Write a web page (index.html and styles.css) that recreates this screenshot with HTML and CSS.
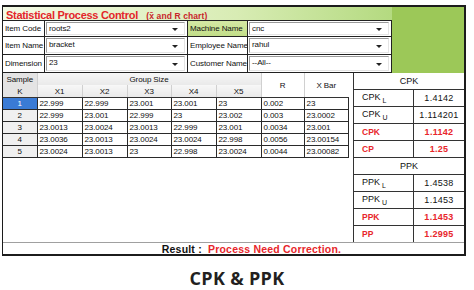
FILE: index.html
```html
<!DOCTYPE html>
<html lang="en">
<head>
    <meta charset="UTF-8">
    <title>CPK &amp; PPK</title>
    <link rel="stylesheet" href="styles.css">
</head>
<body>
    <div class="frame">
        <div class="top">
            <div class="top-left">
                <div class="title">
                    <span class="title-main">Statistical Process Control</span>
                    <span class="title-sub">(x&#772; and R chart)</span>
                </div>
                <div class="form">
                    <div class="lbl">Item Code</div>
                    <div class="cell"><div class="combo">roots2</div></div>
                    <div class="lbl lbl-green">Machine Name</div>
                    <div class="cell"><div class="combo">cnc</div></div>

                    <div class="lbl">Item Name</div>
                    <div class="cell"><div class="combo">bracket</div></div>
                    <div class="lbl">Employee Name</div>
                    <div class="cell"><div class="combo">rahul</div></div>

                    <div class="lbl">Dimension</div>
                    <div class="cell"><div class="combo">23</div></div>
                    <div class="lbl">Customer Name</div>
                    <div class="cell"><div class="combo">--All--</div></div>
                </div>
            </div>
            <div class="green"></div>
        </div>

        <div class="mid">
            <div class="grid-wrap">
                <table class="grid">
                    <colgroup>
                        <col class="c-k"><col class="c-x"><col class="c-x"><col class="c-x3"><col class="c-x"><col class="c-x"><col class="c-r"><col class="c-xb">
                    </colgroup>
                    <thead>
                        <tr class="h1">
                            <th class="hk">Sample</th>
                            <th colspan="5">Group Size</th>
                            <th rowspan="2" class="hw">R</th>
                            <th rowspan="2" class="hw">X Bar</th>
                        </tr>
                        <tr class="h2">
                            <th class="hk">K</th>
                            <th>X1</th><th>X2</th><th>X3</th><th>X4</th><th>X5</th>
                        </tr>
                    </thead>
                    <tbody>
                        <tr><td class="k sel">1</td><td>22.999</td><td>22.999</td><td>23.001</td><td>23.001</td><td>23</td><td>0.002</td><td>23</td></tr>
                        <tr><td class="k">2</td><td>22.999</td><td>23.001</td><td>22.999</td><td>23</td><td>23.002</td><td>0.003</td><td>23.0002</td></tr>
                        <tr><td class="k">3</td><td>23.0013</td><td>23.0024</td><td>23.0013</td><td>22.999</td><td>23.001</td><td>0.0034</td><td>23.001</td></tr>
                        <tr><td class="k">4</td><td>23.0036</td><td>23.0013</td><td>23.0024</td><td>23.0024</td><td>22.998</td><td>0.0056</td><td>23.00154</td></tr>
                        <tr><td class="k">5</td><td>23.0024</td><td>23.0013</td><td>23</td><td>22.998</td><td>23.0024</td><td>0.0044</td><td>23.00082</td></tr>
                    </tbody>
                </table>
            </div>

            <div class="cap">
                <div class="cap-head">CPK</div>
                <div class="cap-row"><span class="cap-lbl">CPK<sub>L</sub></span><span class="cap-val">1.4142</span></div>
                <div class="cap-row"><span class="cap-lbl">CPK<sub>U</sub></span><span class="cap-val">1.114201</span></div>
                <div class="cap-row red"><span class="cap-lbl">CPK</span><span class="cap-val">1.1142</span></div>
                <div class="cap-row red"><span class="cap-lbl">CP</span><span class="cap-val">1.25</span></div>
                <div class="cap-head">PPK</div>
                <div class="cap-row"><span class="cap-lbl">PPK<sub>L</sub></span><span class="cap-val">1.4538</span></div>
                <div class="cap-row"><span class="cap-lbl">PPK<sub>U</sub></span><span class="cap-val">1.1453</span></div>
                <div class="cap-row red"><span class="cap-lbl">PPK</span><span class="cap-val">1.1453</span></div>
                <div class="cap-row red last"><span class="cap-lbl">PP</span><span class="cap-val">1.2995</span></div>
            </div>
        </div>

        <div class="result">Result : <span class="result-msg">Process Need Correction.</span></div>
    </div>

    <div class="caption">CPK &amp; PPK</div>
</body>
</html>
```

FILE: styles.css
```css
body {
    margin: 0;
    padding: 5px 0 0 2px;
    background: #fff;
    font-family: "Liberation Sans", Arial, sans-serif;
    color: #111;
}

.frame {
    width: 461px;
    border: 2px solid #1c1c1c;
    border-left-width: 1px;
    box-sizing: content-box;
    background: #fff;
}

/* top part: title, combos, green block */
.top {
    display: flex;
}

.top-left {
    width: 389px;
}

.green {
    flex: 1;
    background: #9cc858;
}

.title {
    height: 13px;
    line-height: 13px;
    padding-left: 3px;
    background: linear-gradient(to right, #f4fae6, #d8ecb4 60%, #b4da80);
    white-space: nowrap;
    overflow: hidden;
}

.title-main {
    color: #e3262a;
    font-weight: bold;
    font-size: 11px;
    letter-spacing: -0.3px;
}

.title-sub {
    color: #c8242a;
    font-weight: bold;
    font-size: 8.5px;
    margin-left: 4px;
    letter-spacing: 0.1px;
}

.form {
    display: grid;
    grid-template-columns: 42px 143px 60px 144px;
    grid-template-rows: 16px 18px 18px;
    border-top: 1px solid #222;
    font-size: 8px;
    letter-spacing: -0.1px;
}

.lbl {
    display: flex;
    align-items: center;
    padding-left: 2px;
    border-right: 1px solid #222;
    border-bottom: 1px solid #222;
    white-space: nowrap;
    overflow: hidden;
}

.lbl-green {
    background: linear-gradient(#d4e8a4, #c2de88);
}

.cell {
    padding: 1px 2px 1px 1px;
    border-right: 1px solid #222;
    border-bottom: 1px solid #222;
    display: flex;
}

.combo {
    flex: 1;
    position: relative;
    background: #fff;
    border: 1px solid #9a9a9a;
    border-right-color: #e4e4e4;
    border-bottom-color: #e4e4e4;
    padding-left: 2px;
    line-height: 12px;
}

.combo::after {
    content: "";
    position: absolute;
    right: 6px;
    top: 50%;
    margin-top: -1px;
    border-left: 3px solid transparent;
    border-right: 3px solid transparent;
    border-top: 3px solid #222;
}

/* middle: data grid and capability panel */
.mid {
    display: flex;
    height: 169px;
}

.grid-wrap {
    width: 350px;
    background: #fff;
}

.grid {
    border-collapse: collapse;
    table-layout: fixed;
    width: 345px;
    font-size: 8px;
    letter-spacing: -0.1px;
}

.c-k { width: 34px; }
.c-x { width: 45px; }
.c-x3 { width: 44px; }
.c-r { width: 43px; }
.c-xb { width: 44px; }

.grid th {
    font-weight: normal;
    background: linear-gradient(#f7f7f7, #e9e9e9);
    border-left: 1px solid #d0d0d0;
    padding: 0;
    text-align: center;
}

.grid .h1 th {
    height: 12px;
}

.grid .h2 th {
    height: 12px;
    border-bottom: 1px solid #333;
}

.grid th.hw {
    background: #fff;
    border-bottom: 1px solid #333;
}

.grid th.hk {
    background: #e4e4e4;
    border-left: none;
}

.grid td {
    height: 11px;
    padding: 0 0 0 2px;
    border: 1px solid #2a2a2a;
    white-space: nowrap;
    overflow: hidden;
}

.grid td.k {
    text-align: center;
    padding: 0;
    background: #f0f0f0;
    border-left: none;
}

.grid td.sel {
    background: #3a7bd5;
    color: #fff;
}

.cap {
    flex: 1;
    border-left: 1px solid #333;
    display: flex;
    flex-direction: column;
}

.cap-head {
    height: 16px;
    line-height: 16px;
    text-align: center;
    font-size: 9px;
    border-bottom: 1px solid #333;
}

.cap-row {
    display: flex;
    height: 16px;
    border-bottom: 1px solid #333;
    font-size: 9px;
}

.cap-row.last {
    border-bottom: none;
    height: 18px;
}

.cap-lbl {
    width: 51px;
    padding-left: 8px;
    border-right: 1px solid #333;
    line-height: 14px;
}

.cap-lbl sub {
    font-size: 7px;
    margin-left: 2px;
    vertical-align: -3px;
}

.cap-val {
    flex: 1;
    text-align: center;
    line-height: 17px;
    letter-spacing: 0.3px;
}

.cap-row.red {
    color: #e8262b;
    font-weight: bold;
    font-size: 8.5px;
}

.cap-row.red .cap-lbl,
.cap-row.red .cap-val {
    line-height: 16px;
}

.cap-row.red .cap-val {
    font-size: 9px;
}

.result {
    height: 11px;
    line-height: 12px;
    overflow: hidden;
    border-top: 1px solid #a0a0a0;
    text-align: center;
    padding-left: 36px;
    font-size: 10.5px;
    font-weight: bold;
    letter-spacing: 0.2px;
    white-space: nowrap;
}

.result-msg {
    color: #e8262b;
    margin-left: 3px;
}

.caption {
    width: 470px;
    margin-top: 10px;
    text-align: center;
    font-family: "Open Sans", sans-serif;
    font-weight: 700;
    font-size: 18px;
    letter-spacing: 0.3px;
    color: #231f20;
}
```
